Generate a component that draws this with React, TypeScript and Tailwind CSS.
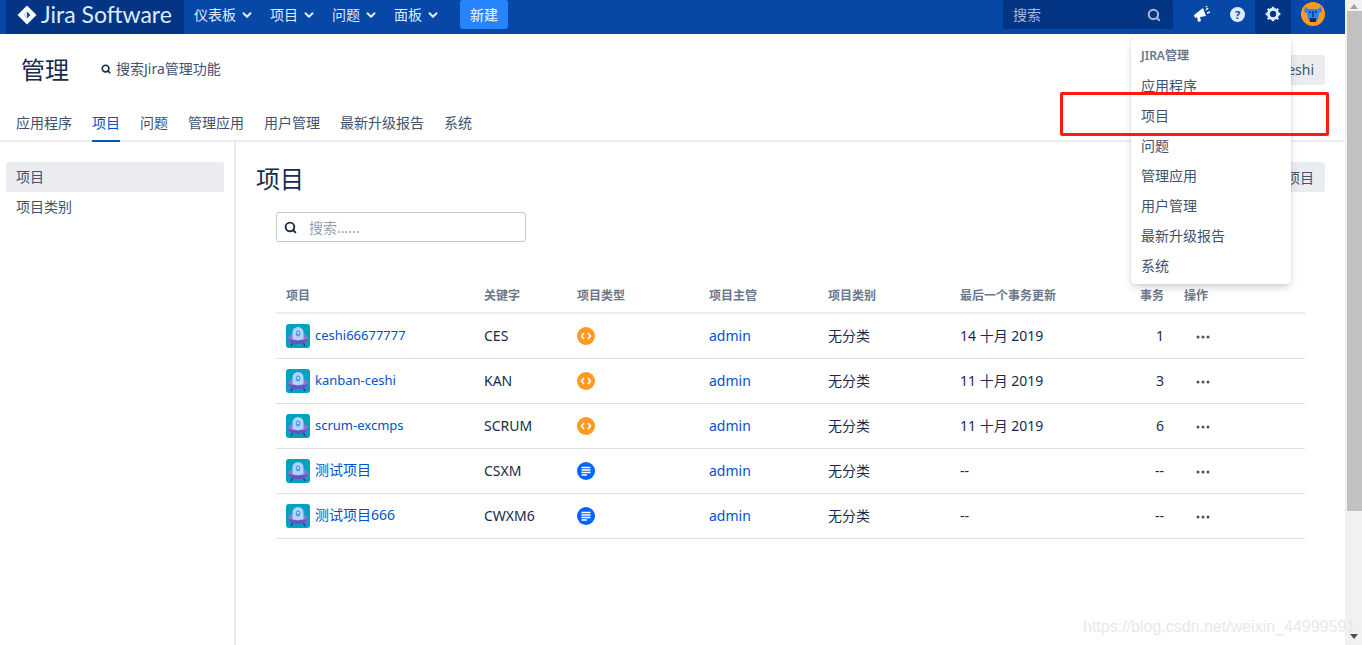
import { ChevronDown, Search } from "lucide-react";

const font = "font-['Noto_Sans','Noto_Sans_CJK_SC',sans-serif]";

const topNav = ["仪表板", "项目", "问题", "面板"];
const tabs = ["应用程序", "项目", "问题", "管理应用", "用户管理", "最新升级报告", "系统"];
const menu = ["应用程序", "项目", "问题", "管理应用", "用户管理", "最新升级报告", "系统"];

const projects = [
  { name: "ceshi66677777", key: "CES", type: "code", date: "14 十月 2019", count: "1", latin: true },
  { name: "kanban-ceshi", key: "KAN", type: "code", date: "11 十月 2019", count: "3", latin: true },
  { name: "scrum-excmps", key: "SCRUM", type: "code", date: "11 十月 2019", count: "6", latin: true },
  { name: "测试项目", key: "CSXM", type: "doc", date: "--", count: "--", latin: false },
  { name: "测试项目666", key: "CWXM6", type: "doc", date: "--", count: "--", latin: false },
];

function JiraMark() {
  return (
    <svg width="20" height="20" viewBox="0 0 20 20">
      <path d="M10 0.5 19.5 10 10 19.5 0.5 10Z" fill="#fff" />
      <path d="M10 6.6 13.4 10 10 13.4 6.6 10Z" fill="#0747a6" />
      <path d="M10 6.6 6.6 10 10 13.4Z" fill="#deebff" />
    </svg>
  );
}

function Ufo() {
  return (
    <svg width="24" height="24" viewBox="0 0 24 24" className="rounded-[3px]">
      <rect width="24" height="24" fill="#00a3bf" />
      <path d="M7 18l-2 4M17 18l2 4" stroke="#403294" strokeWidth="1.6" />
      <ellipse cx="12" cy="14.500" rx="10" ry="5.500" fill="#8777d9" />
      <path d="M2 14.500c1 3.500 5 5.500 10 5.500s9-2 10-5.500c-3 2.500-17 2.500-20 0z" fill="#6554c0" />
      <path d="M6.500 15V8.500a5.500 5.500 0 0 1 11 0V15c-3 1.500-8 1.500-11 0z" fill="#b3d4ff" />
      <ellipse cx="12" cy="9.500" rx="2.200" ry="3" fill="#4c9aff" />
      <circle cx="12" cy="9" r="1" fill="#deebff" />
    </svg>
  );
}

function TypeIcon({ type }: { type: string }) {
  if (type === "code") {
    return (
      <svg width="18" height="18" viewBox="0 0 18 18">
        <circle cx="9" cy="9" r="9" fill="#ff991f" />
        <path d="M7 6 4.600 9 7 12M11 6l2.400 3L11 12" fill="none" stroke="#fff" strokeWidth="1.700" />
      </svg>
    );
  }
  return (
    <svg width="18" height="18" viewBox="0 0 18 18">
      <circle cx="9" cy="9" r="9" fill="#0065ff" />
      <path d="M4.500 5.500h9M4.500 8h9M4.500 10.500h9M4.500 13h5.500" stroke="#fff" strokeWidth="1.400" />
    </svg>
  );
}

function Dots() {
  return (
    <svg width="14" height="4" viewBox="0 0 14 4" className="block">
      <circle cx="2" cy="2" r="1.500" fill="#42526e" />
      <circle cx="7" cy="2" r="1.500" fill="#42526e" />
      <circle cx="12" cy="2" r="1.500" fill="#42526e" />
    </svg>
  );
}

function Bull() {
  return (
    <svg width="24" height="24" viewBox="0 0 24 24">
      <circle cx="12" cy="12" r="12" fill="#ff991f" />
      <path d="M4 4.500 7 7h10l3-2.500L21 10l-3 1-1 6-2 3H9l-2-3-1-6-3-1z" fill="#2684ff" />
      <rect x="8" y="9" width="2" height="2" fill="#0747a6" />
      <rect x="14" y="9" width="2" height="2" fill="#0747a6" />
      <rect x="11" y="9" width="2" height="6" fill="#0747a6" />
      <rect x="9" y="16" width="6" height="4" fill="#172b4d" />
    </svg>
  );
}

export default function App() {
  return (
    <div className={`${font} relative flex h-[645px] w-[1362px] overflow-hidden bg-white text-[14px] text-[#172b4d]`}>
      <div className="flex w-[1345px] flex-col">
        {/* top nav */}
        <header className="flex h-[34px] shrink-0 bg-[#0747a6] pl-[6px] text-white">
          <div className="flex h-full w-[178px] items-center gap-[4px] bg-[#043584] pb-[5px] pl-[11px]">
            <JiraMark />
            <span className="font-['Lato',sans-serif] text-[23px] leading-none text-[#deebff]">Jira Software</span>
          </div>
          <nav className="ml-[10px] flex items-center gap-[16px] pb-[5px] text-[#deebff]">
            {topNav.map((n) => (
              <div key={n} className="flex items-center gap-[4px]">
                <span>{n}</span>
                <ChevronDown size={14} strokeWidth={3.5} />
              </div>
            ))}
          </nav>
          <button className="ml-[20px] h-[29px] w-[48px] rounded-[3px] bg-[#2684ff] text-center font-medium text-[#deebff]">新建</button>
          <div className="ml-auto flex h-full">
            <div className="flex h-[29px] w-[170px] items-center justify-between rounded-[3px] bg-[#043584] pl-[10px] pr-[12px] text-[#a5b9d8]">
              <span>搜索</span>
              <Search size={14} strokeWidth={3.5} />
            </div>
            <div className="ml-[19px] flex w-[20px] justify-center pt-[6px]">
              <svg width="16" height="16" viewBox="0 0 16 16" fill="#fff">
                <path d="M0 9 9 2l3 8-6 1 1 4-3 1-1-5-2 1z" />
                <path d="M12 4l2-2M13 7l3-1M12 1l1-1" stroke="#fff" strokeWidth="1.500" />
              </svg>
            </div>
            <div className="ml-[18px] mt-[7px] flex h-[15px] w-[15px] items-center justify-center rounded-full bg-[#deebff] text-[11px] font-bold leading-none text-[#0747a6]">?</div>
            <div className="ml-[10px] flex h-full w-[36px] justify-center bg-[#043584] pt-[6px]">
              <svg width="16" height="16" viewBox="0 0 24 24" fill="none" stroke="#deebff" strokeWidth="4.500">
                <circle cx="12" cy="12" r="7" />
                <path strokeWidth="3.500" d="M12 1v4M12 19v4M1 12h4M19 12h4M4.200 4.200l3 3M16.800 16.800l3 3M4.200 19.800l3-3M16.800 7.200l3-3" />
              </svg>
            </div>
            <div className="ml-[10px] mr-[20px] pt-[2px]">
              <Bull />
            </div>
          </div>
        </header>

        {/* admin header */}
        <div className="flex h-[71px] shrink-0 items-center pl-[21px] pr-[20px]">
          <h1 className="text-[24px] leading-none">管理</h1>
          <div className="ml-[32px] flex items-center gap-[5px] pb-[2px] text-[#42526e]">
            <Search size={10} strokeWidth={4} className="text-[#172b4d]" />
            <span>搜索Jira管理功能</span>
          </div>
          <div className="ml-auto flex items-center">
            <div className="relative mr-[68px] mt-[-6px]">
              <svg width="16" height="19" viewBox="0 0 16 19">
                <path d="M0 1h14v13H9l-3 4v-4H0z" fill="#043584" />
                <rect x="6" y="3" width="2" height="6" fill="#fff" />
                <rect x="6" y="10" width="2" height="2" fill="#fff" />
              </svg>
            </div>
            <div className="flex h-[30px] w-[60px] items-center justify-end rounded-[3px] bg-[#ebecf0] pr-[11px] text-[#42526e]">eshi</div>
          </div>
        </div>

        {/* tabs */}
        <div className="flex h-[37px] shrink-0 gap-[20px] border-b-2 border-[#ebecf0] pl-[16px] text-[#42526e]">
          {tabs.map((t, i) => (
            <div key={t} className={i === 1 ? "-mb-[2px] h-[37px] border-b-2 border-[#0052cc] pt-[7px] leading-[21px] text-[#0052cc]" : "pt-[7px] leading-[21px]"}>
              {t}
            </div>
          ))}
        </div>

        <div className="flex min-h-0 flex-1">
          {/* sidebar */}
          <aside className="w-[236px] shrink-0 border-r-2 border-[#ebecf0] pl-[6px] pr-[10px] pt-[20px] text-[#42526e]">
            <div className="flex h-[30px] items-center rounded-[3px] bg-[#ebecf0] pb-[2px] pl-[10px]">项目</div>
            <div className="flex h-[30px] items-center pb-[2px] pl-[10px]">项目类别</div>
          </aside>

          {/* content */}
          <main className="min-w-0 flex-1 pl-[20px] pr-[20px] pt-[20px]">
            <div className="flex items-start justify-between">
              <h2 className="text-[24px] leading-[34px]">项目</h2>
              <div className="flex h-[30px] w-[100px] items-center justify-end rounded-[3px] bg-[#ebecf0] pr-[11px] text-[#42526e]">创建项目</div>
            </div>
            <div className="ml-[20px] mt-[16px] flex h-[30px] w-[250px] items-center gap-[12px] rounded-[3px] border border-[#c1c7d0] pl-[7px]">
              <Search size={13} strokeWidth={3.5} className="text-[#172b4d]" />
              <span className="text-[#97a0af]">搜索......</span>
            </div>
            <table className="ml-[20px] mt-[37px] w-[1029px] table-fixed border-collapse">
              <colgroup>
                <col className="w-[198px]" />
                <col className="w-[93px]" />
                <col className="w-[132px]" />
                <col className="w-[119px]" />
                <col className="w-[132px]" />
                <col className="w-[224px]" />
                <col />
              </colgroup>
              <thead>
                <tr className="h-[34px] border-b-2 border-[#ebecf0] text-left text-[12px] text-[#6b778c]">
                  <th className="pl-[10px] font-semibold">项目</th>
                  <th className="pl-[10px] font-semibold">关键字</th>
                  <th className="pl-[10px] font-semibold">项目类型</th>
                  <th className="pl-[10px] font-semibold">项目主管</th>
                  <th className="pl-[10px] font-semibold">项目类别</th>
                  <th className="pl-[10px] font-semibold">最后一个事务更新</th>
                  <th className="pl-[10px] font-semibold">
                    <div className="flex">
                      <span className="-ml-[53px] w-[33px] text-right">事务</span>
                      <span className="ml-[20px]">操作</span>
                    </div>
                  </th>
                </tr>
              </thead>
              <tbody>
                {projects.map((p) => (
                  <tr key={p.key} className="h-[45px] border-b border-[#dfe1e6]">
                    <td className="pl-[10px]">
                      <div className="flex items-center gap-[5px]">
                        <Ufo />
                        <a className={p.latin ? "text-[13px] text-[#0052cc]" : "-translate-y-[1px] text-[#0052cc]"}>{p.name}</a>
                      </div>
                    </td>
                    <td className="pl-[10px]">{p.key}</td>
                    <td className="pl-[10px]">
                      <TypeIcon type={p.type} />
                    </td>
                    <td className="pl-[10px] text-[#0052cc]">admin</td>
                    <td className="pl-[10px]">无分类</td>
                    <td className="pl-[10px]">{p.date}</td>
                    <td className="pl-[10px]">
                      <div className="flex items-center">
                        <span className="-ml-[53px] w-[33px] text-right">{p.count}</span>
                        <span className="ml-[32px] pt-[2px]">
                          <Dots />
                        </span>
                      </div>
                    </td>
                  </tr>
                ))}
              </tbody>
            </table>
          </main>
        </div>
      </div>

      {/* scrollbar */}
      <div className="flex w-[17px] flex-col items-end bg-[#f1f1f1]">
        <div className="mr-[4px] mt-[4px] h-0 w-0 border-x-[4px] border-b-[5px] border-x-transparent border-b-[#a3a3a3]" />
        <div className="mt-[2px] h-[500px] w-[15px] bg-[#c1c1c1]" />
        <div className="mt-auto h-[17px] w-full pt-[6px]">
          <div className="mx-auto h-0 w-0 border-x-[4px] border-t-[5px] border-x-transparent border-t-[#505050]" />
        </div>
      </div>

      {/* admin dropdown */}
      <div className="absolute left-[1131px] top-[38px] w-[160px] rounded-[3px] bg-white pb-[3px] pt-[3px] text-[#42526e] shadow-[0_4px_8px_-2px_rgba(9,30,66,0.25),0_0_1px_rgba(9,30,66,0.31)]">
        <div className="flex h-[30px] items-center pl-[10px] text-[12px] font-semibold text-[#6b778c]">JIRA管理</div>
        {menu.map((m) => (
          <div key={m} className="flex h-[30px] items-center pb-[2px] pl-[10px]">{m}</div>
        ))}
      </div>

      {/* red annotation box */}
      <div className="absolute left-[1060px] top-[92px] h-[44px] w-[269px] rounded-[2px] border-[3px] border-[#ff1a0f]" />

      {/* watermark */}
      <div className="absolute left-[1083px] top-[615px] font-['Liberation_Sans',sans-serif] text-[16px] text-[#e8e8e8]">https://blog.csdn.net/weixin_44999591</div>
    </div>
  );
}
